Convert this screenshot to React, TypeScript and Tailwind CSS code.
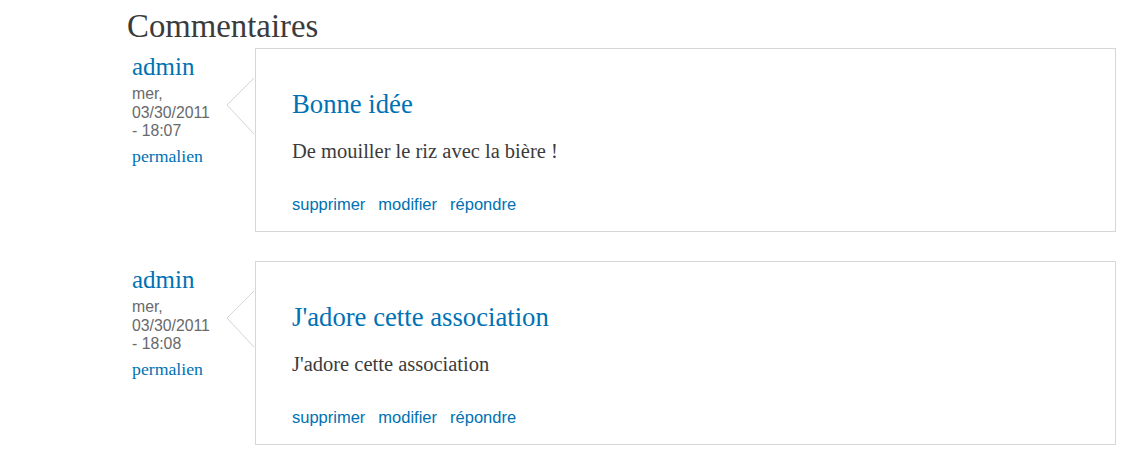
import React from "react";

type C = { title: string; body: string; time: string };

const comments: C[] = [
  { title: "Bonne idée", body: "De mouiller le riz avec la bière !", time: "18:07" },
  { title: "J'adore cette association", body: "J'adore cette association", time: "18:08" },
];

function Comment({ c }: { c: C }) {
  return (
    <div className="flex">
      <div className="w-[128px] shrink-0 pl-[5px] pt-[4px]">
        <div className="font-['Liberation_Serif',serif] text-[25px] leading-[30px] text-[#0071b3]">admin</div>
        <div className="mt-[3px] w-[84px] font-['Liberation_Sans',Arial,sans-serif] text-[15.8px] leading-[18.5px] text-[#68696b]">
          mer, 03/30/2011 - {c.time}
        </div>
        <div className="mt-[5px] font-['Liberation_Serif',serif] text-[17.75px] leading-[20px] text-[#0071b3]">
          permalien
        </div>
      </div>
      <div className="relative flex-1 border border-[#d3d7d9] bg-white pt-[39px] pb-[17px] pl-[36px]">
        <svg className="absolute top-[28px] left-[-30px]" width="30" height="58" viewBox="0 0 30 58">
          <polyline points="28,1 1,28 28,57" fill="#fff" stroke="#d3d7d9" strokeWidth="1" />
        </svg>
        <h3 className="font-['Liberation_Serif',serif] text-[26.7px] leading-[32px] text-[#0071b3]">{c.title}</h3>
        <p className="mt-[19px] font-['Liberation_Serif',serif] text-[20.5px] leading-[24px] text-[#3b3b3b]">{c.body}</p>
        <div className="mt-[31px] flex gap-[13px] font-['Liberation_Sans',Arial,sans-serif] text-[16.5px] leading-[20px] text-[#0071b3]">
          <span>supprimer</span>
          <span>modifier</span>
          <span>répondre</span>
        </div>
      </div>
    </div>
  );
}

export default function App() {
  return (
    <div className="min-h-[459px] w-[1142px] bg-white pt-[6px] pr-[26px] pl-[127px]">
      <h2 className="font-['Liberation_Serif',serif] text-[32.8px] leading-[40px] text-[#3b3b3b]">Commentaires</h2>
      <div className="mt-[2px] flex flex-col gap-[29px]">
        {comments.map((c, i) => (
          <Comment key={i} c={c} />
        ))}
      </div>
    </div>
  );
}
